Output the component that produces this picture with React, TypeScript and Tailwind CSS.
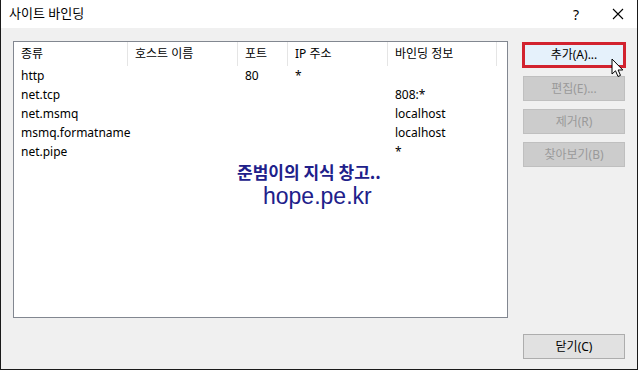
import React from 'react';

const columns = [
  { label: '종류', width: 114 },
  { label: '호스트 이름', width: 110 },
  { label: '포트', width: 50 },
  { label: 'IP 주소', width: 100 },
  { label: '바인딩 정보', width: 109 },
];

const rows = [
  ['http', '', '80', '*', ''],
  ['net.tcp', '', '', '', '808:*'],
  ['net.msmq', '', '', '', 'localhost'],
  ['msmq.formatname', '', '', '', 'localhost'],
  ['net.pipe', '', '', '', '*'],
];

const uiFont = { fontFamily: '"Noto Sans", "Noto Sans CJK KR", sans-serif' };

const DisabledButton: React.FC<{ label: string }> = ({ label }) => (
  <div className="mx-[1px] h-[25px] flex items-center justify-center bg-[#cccccc] border border-[#bfbfbf] text-[12px] text-[#9a9a9a]">
    {label}
  </div>
);

const App: React.FC = () => {
  return (
    <div className="w-[638px] h-[370px] flex flex-col border-x border-b border-[#1a1a1a] text-[12px] text-black" style={uiFont}>
      {/* title bar */}
      <div className="h-[28px] bg-white flex items-center pl-[8px] shrink-0">
        <span className="text-[13px] flex-1">사이트 바인딩</span>
        <span className="text-[14px] w-[20px] text-center mr-[26px]">?</span>
        <svg width="12" height="12" viewBox="0 0 12 12" className="mr-[13px]">
          <path d="M1 1 L11 11 M11 1 L1 11" stroke="#000" strokeWidth="1.1" />
        </svg>
      </div>

      <div className="flex-1 bg-[#f0f0f0] flex pt-[13px] pl-[12px] pb-[10px] gap-[14px] relative">
        {/* list view */}
        <div className="w-[495px] h-[277px] bg-white border border-[#828790] relative">
          <div className="flex h-[24px]">
            {columns.map((c) => (
              <div
                key={c.label}
                className="h-full flex items-center pl-[7px] border-r border-[#e5e5e5]"
                style={{ width: c.width }}
              >
                {c.label}
              </div>
            ))}
          </div>
          {rows.map((r, i) => (
            <div key={i} className="flex h-[19px] items-center">
              {r.map((cell, j) => (
                <div key={j} className="pl-[7px] whitespace-nowrap" style={{ width: columns[j].width }}>
                  {cell}
                </div>
              ))}
            </div>
          ))}

          {/* watermark */}
          <div className="absolute left-[223px] top-[119px] text-[#20208a]">
            <div className="text-[17px] font-bold leading-[22px]" style={{ fontFamily: '"Noto Sans CJK KR", sans-serif' }}>
              준범이의 지식 창고..
            </div>
            <div className="text-[23px] leading-[26px] pl-[26px]" style={{ fontFamily: '"Liberation Sans", sans-serif' }}>
              hope.pe.kr
            </div>
          </div>
        </div>

        {/* buttons */}
        <div className="w-[104px] flex flex-col mt-[1px]">
          <div className="h-[26px] border-[3px] border-[#d2232f] bg-[#e5f1fb] flex items-center justify-center text-[12px]">
            추가(A)...
          </div>
          <div className="flex flex-col gap-[8px] mt-[8px]">
            <DisabledButton label="편집(E)..." />
            <DisabledButton label="제거(R)" />
            <DisabledButton label="찾아보기(B)" />
          </div>
          <div className="mt-auto mx-[1px] h-[25px] flex items-center justify-center bg-[#e1e1e1] border border-[#adadad]">
            닫기(C)
          </div>
        </div>

        {/* mouse cursor */}
        <svg className="absolute left-[610px] top-[30px]" width="14" height="21" viewBox="0 0 14 21">
          <path d="M1 1 L1 16 L4.5 12.8 L7 18.5 L9.5 17.4 L7.1 12 L11.8 12 Z" fill="#fff" stroke="#000" strokeWidth="1" strokeLinejoin="round" />
        </svg>
      </div>
    </div>
  );
};

export default App;
